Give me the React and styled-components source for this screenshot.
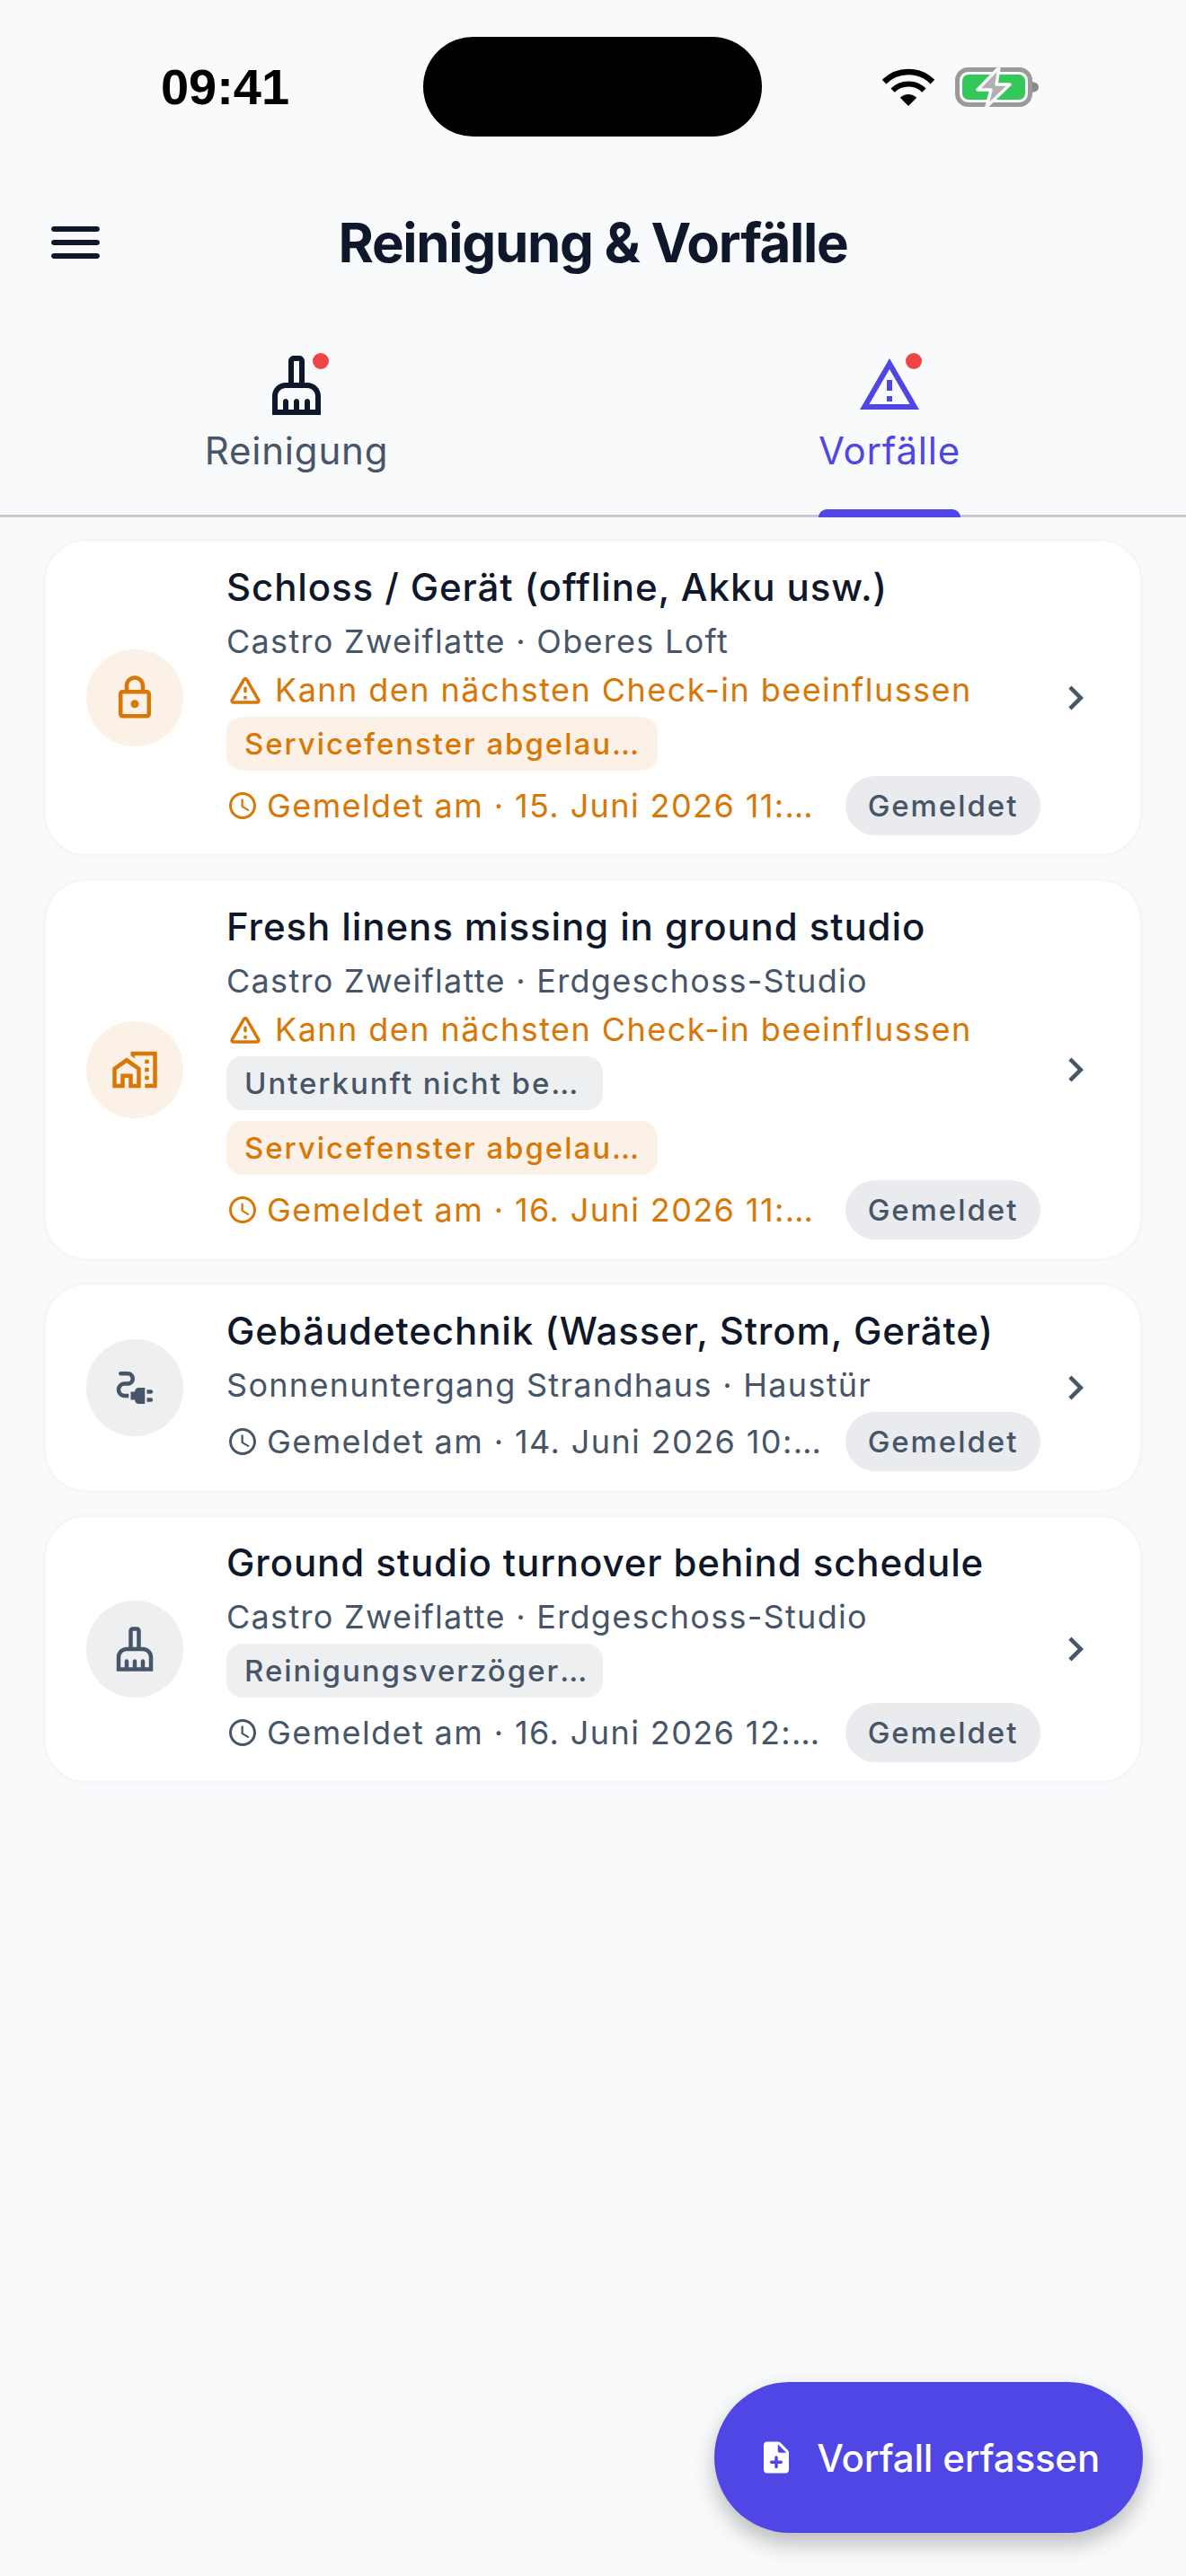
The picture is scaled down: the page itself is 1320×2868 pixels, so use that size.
import React from "react";
import styled, { createGlobalStyle } from "styled-components";
import {
    MdChevronRight,
    MdElectricalServices,
    MdOutlineAccessTime,
    MdOutlineCleaningServices,
    MdOutlineLock,
    MdOutlineMapsHomeWork,
    MdOutlineWarningAmber,
} from "react-icons/md";

const ORANGE = "#d97706";
const SLATE = "#475569";
const INK = "#0f172a";
const INDIGO = "#4f46e5";

const tones = {
    warn: { fg: ORANGE, bg: "#fcf1e7" },
    neutral: { fg: SLATE, bg: "#edeff1" },
};

const GlobalStyle = createGlobalStyle`
    html, body {
        margin: 0;
        padding: 0;
        background: #f9fafc;
    }
    * {
        box-sizing: border-box;
    }
`;

const incidents = [
    {
        Icon: MdOutlineLock,
        tone: "warn",
        title: "Schloss / Gerät (offline, Akku usw.)",
        place: "Castro Zweiflatte · Oberes Loft",
        warning: "Kann den nächsten Check-in beeinflussen",
        pills: [{ text: "Servicefenster abgelaufen", tone: "warn", width: 480 }],
        date: "Gemeldet am · 15. Juni 2026 11:24",
    },
    {
        Icon: MdOutlineMapsHomeWork,
        tone: "warn",
        title: "Fresh linens missing in ground studio",
        place: "Castro Zweiflatte · Erdgeschoss-Studio",
        warning: "Kann den nächsten Check-in beeinflussen",
        pills: [
            { text: "Unterkunft nicht bereit", tone: "neutral", width: 419 },
            { text: "Servicefenster abgelaufen", tone: "warn", width: 480 },
        ],
        date: "Gemeldet am · 16. Juni 2026 11:02",
    },
    {
        Icon: MdElectricalServices,
        tone: "neutral",
        title: "Gebäudetechnik (Wasser, Strom, Geräte)",
        place: "Sonnenuntergang Strandhaus · Haustür",
        pills: [],
        date: "Gemeldet am · 14. Juni 2026 10:15",
    },
    {
        Icon: MdOutlineCleaningServices,
        tone: "neutral",
        title: "Ground studio turnover behind schedule",
        place: "Castro Zweiflatte · Erdgeschoss-Studio",
        pills: [{ text: "Reinigungsverzögerung", tone: "neutral", width: 419 }],
        date: "Gemeldet am · 16. Juni 2026 12:40",
    },
];

const WifiIcon = () => (
    <svg width="58" height="42" viewBox="0 0 58 42">
        <path d="M19.8 32.8 A13 13 0 0 1 38.2 32.8 L29 42 Z" fill="#000" />
        <path d="M11.6 24.6 A24.6 24.6 0 0 1 46.4 24.6" fill="none" stroke="#000" strokeWidth="6" />
        <path d="M2.1 15.1 A38 38 0 0 1 55.9 15.1" fill="none" stroke="#000" strokeWidth="6.5" />
    </svg>
);

const BatteryIcon = () => (
    <svg width="94" height="46" viewBox="0 0 94 46">
        <rect x="2.5" y="3.5" width="81" height="39" rx="12" fill="none" stroke="#9a9a9a" strokeWidth="5" />
        <rect x="8" y="9" width="70" height="28" rx="7" fill="#34c759" />
        <path d="M86 17 C91 18 93 20 93 23 C93 26 91 28 86 29 Z" fill="#8a8a8a" />
        <path
            d="M49 1 L25 26 H40 L35 45 L61 20 H46 Z"
            fill="#b0b0b0"
            stroke="#f9fafc"
            strokeWidth="3.5"
            strokeLinejoin="round"
        />
    </svg>
);

const MenuIcon = () => (
    <svg width="72" height="72" viewBox="0 0 24 24" fill={INK}>
        <path d="M4 18h16c.55 0 1-.45 1-1s-.45-1-1-1H4c-.55 0-1 .45-1 1s.45 1 1 1zm0-5h16c.55 0 1-.45 1-1s-.45-1-1-1H4c-.55 0-1 .45-1 1s.45 1 1 1zM3 7c0 .55.45 1 1 1h16c.55 0 1-.45 1-1s-.45-1-1-1H4c-.55 0-1 .45-1 1z" />
    </svg>
);

const WarningRoundedIcon = () => (
    <svg width="42" height="42" viewBox="0 0 24 24" fill="currentColor">
        <path d="M12 5.99 19.53 19H4.47L12 5.99M2.74 18c-.77 1.33.19 3 1.73 3h15.06c1.54 0 2.5-1.67 1.73-3L13.73 4.99c-.77-1.33-2.69-1.33-3.46 0L2.74 18zM11 11v2c0 .55.45 1 1 1s1-.45 1-1v-2c0-.55-.45-1-1-1s-1 .45-1 1zm0 5h2v2h-2z" />
    </svg>
);

const NoteAddIcon = () => (
    <svg width="42" height="42" viewBox="0 0 24 24" fill="#fff">
        <path d="M14.59 2.59c-.38-.38-.89-.59-1.42-.59H6c-1.1 0-2 .9-2 2v16c0 1.1.89 2 1.99 2H18c1.1 0 2-.9 2-2V8.83c0-.53-.21-1.04-.59-1.41l-4.82-4.83zM15 16h-2v2c0 .55-.45 1-1 1s-1-.45-1-1v-2H9c-.55 0-1-.45-1-1s.45-1 1-1h2v-2c0-.55.45-1 1-1s1 .45 1 1v2h2c.55 0 1 .45 1 1s-.45 1-1 1zm-2-7V3.5L18.5 9H14c-.55 0-1-.45-1-1z" />
    </svg>
);

const App = () => (
    <Screen>
        <GlobalStyle />
        <StatusBar>
            <Time>09:41</Time>
            <Island />
            <StatusIcons>
                <WifiIcon />
                <BatteryIcon />
            </StatusIcons>
        </StatusBar>

        <Header>
            <MenuIcon />
            <Title>Reinigung &amp; Vorfälle</Title>
        </Header>

        <Tabs>
            <Tab>
                <TabIcon>
                    <MdOutlineCleaningServices size={72} />
                    <Dot />
                </TabIcon>
                <TabLabel>Reinigung</TabLabel>
            </Tab>
            <Tab $active>
                <TabIcon>
                    <MdOutlineWarningAmber size={72} />
                    <Dot />
                </TabIcon>
                <TabLabel $active>Vorfälle</TabLabel>
                <Indicator />
            </Tab>
        </Tabs>

        <List>
            {incidents.map(({ Icon, tone, title, place, warning, pills, date }) => (
                <Card key={title}>
                    <Circle $tone={tone}>
                        <Icon size={54} />
                    </Circle>
                    <Body>
                        <CardTitle>{title}</CardTitle>
                        <Place>{place}</Place>
                        {warning && (
                            <Warning>
                                <WarningRoundedIcon />
                                {warning}
                            </Warning>
                        )}
                        {pills.length > 0 && (
                            <Pills>
                                {pills.map(pill => (
                                    <Pill key={pill.text} $tone={pill.tone} $width={pill.width}>
                                        <PillText>{pill.text}</PillText>
                                    </Pill>
                                ))}
                            </Pills>
                        )}
                        <Footer>
                            <DateLine $warn={Boolean(warning)}>
                                <MdOutlineAccessTime size={36} />
                                <DateText>{date}</DateText>
                            </DateLine>
                            <Status>Gemeldet</Status>
                        </Footer>
                    </Body>
                    <Chevron>
                        <MdChevronRight size={54} />
                    </Chevron>
                </Card>
            ))}
        </List>

        <Fab>
            <NoteAddIcon />
            Vorfall erfassen
        </Fab>
    </Screen>
);

const Screen = styled.div`
    position: relative;
    width: 1320px;
    height: 2868px;
    overflow: hidden;
    background: #f9fafc;
    font-family: Inter, "Noto Sans", sans-serif;
`;

const StatusBar = styled.div`
    display: grid;
    grid-template-columns: 471px 377px 472px;
    align-items: center;
    height: 192px;
    padding-top: 41px;
    padding-bottom: 40px;
`;

const Time = styled.div`
    padding-left: 30px;
    text-align: center;
    font-family: "Liberation Sans", Arial, sans-serif;
    font-size: 56px;
    font-weight: 700;
    color: #000;
`;

const Island = styled.div`
    height: 111px;
    border-radius: 56px;
    background: #000;
`;

const StatusIcons = styled.div`
    display: flex;
    align-items: center;
    gap: 23px;
    padding-left: 134px;
`;

const Header = styled.div`
    display: grid;
    grid-template-columns: 72px 1fr 72px;
    align-items: center;
    height: 72px;
    margin-top: 42px;
    padding: 0 48px;
`;

const Title = styled.h1`
    margin: 0;
    text-align: center;
    font-size: 60px;
    font-weight: 700;
    line-height: 72px;
    letter-spacing: -1.3px;
    color: ${INK};
`;

const Tabs = styled.div`
    display: grid;
    grid-template-columns: 1fr 1fr;
    height: 183px;
    margin-top: 87px;
    border-bottom: 3px solid #c8c9d3;
`;

const Tab = styled.div`
    position: relative;
    display: flex;
    flex-direction: column;
    align-items: center;
    color: ${props => (props.$active ? INDIGO : INK)};
`;

const TabIcon = styled.div`
    position: relative;
    width: 72px;
    height: 72px;
`;

const Dot = styled.span`
    position: absolute;
    top: 0;
    right: 0;
    width: 18px;
    height: 18px;
    border-radius: 50%;
    background: #ef4444;
`;

const TabLabel = styled.div`
    margin-top: 7px;
    font-size: 42px;
    font-weight: 400;
    line-height: 60px;
    letter-spacing: 0.8px;
    color: ${props => (props.$active ? INDIGO : SLATE)};
`;

const Indicator = styled.span`
    position: absolute;
    bottom: -3px;
    left: 251px;
    width: 158px;
    height: 9px;
    border-radius: 9px 9px 0 0;
    background: ${INDIGO};
`;

const List = styled.div`
    display: flex;
    flex-direction: column;
    gap: 24px;
    padding: 24px 48px 0;
`;

const Card = styled.div`
    display: flex;
    align-items: center;
    padding: 21px 45px 21px 45px;
    border: 3px solid #f5f6f9;
    border-radius: 48px;
    background: #fff;
`;

const Circle = styled.div`
    flex: none;
    display: flex;
    align-items: center;
    justify-content: center;
    width: 108px;
    height: 108px;
    margin-right: 48px;
    border-radius: 50%;
    color: ${props => tones[props.$tone].fg};
    background: ${props => tones[props.$tone].bg};
`;

const Body = styled.div`
    flex: 1;
    min-width: 0;
    display: flex;
    flex-direction: column;
    gap: 6px;
    margin-right: 12px;
`;

const CardTitle = styled.div`
    font-size: 42px;
    font-weight: 500;
    line-height: 60px;
    letter-spacing: 0.9px;
    color: ${INK};
`;

const Place = styled.div`
    font-size: 36px;
    line-height: 48px;
    letter-spacing: 1.3px;
    color: ${SLATE};
`;

const Warning = styled.div`
    display: flex;
    align-items: center;
    gap: 12px;
    font-size: 36px;
    line-height: 48px;
    letter-spacing: 1.45px;
    color: ${ORANGE};
`;

const Pills = styled.div`
    display: flex;
    flex-direction: column;
    gap: 12px;
`;

const Pill = styled.div`
    width: ${props => props.$width}px;
    height: 60px;
    padding: 0 14px 0 20px;
    border-radius: 18px;
    line-height: 60px;
    color: ${props => tones[props.$tone].fg};
    background: ${props => tones[props.$tone].bg};
`;

const PillText = styled.div`
    overflow: hidden;
    white-space: nowrap;
    text-overflow: ellipsis;
    font-size: 33px;
    font-weight: 500;
    letter-spacing: 1.95px;
`;

const Footer = styled.div`
    display: flex;
    align-items: center;
    justify-content: space-between;
    gap: 26px;
    height: 66px;
`;

const DateLine = styled.div`
    flex: 1;
    min-width: 0;
    display: flex;
    align-items: center;
    gap: 9px;
    color: ${props => (props.$warn ? ORANGE : SLATE)};

    svg {
        flex: none;
    }
`;

const DateText = styled.div`
    overflow: hidden;
    white-space: nowrap;
    text-overflow: ellipsis;
    font-size: 36px;
    line-height: 48px;
    letter-spacing: 1.4px;
`;

const Status = styled.div`
    flex: none;
    width: 217px;
    height: 66px;
    border-radius: 33px;
    text-align: center;
    font-size: 33px;
    font-weight: 500;
    line-height: 66px;
    letter-spacing: 1.95px;
    color: ${SLATE};
    background: #e9ebee;
`;

const Chevron = styled.div`
    flex: none;
    display: flex;
    color: ${SLATE};
`;

const Fab = styled.button`
    position: absolute;
    right: 48px;
    bottom: 48px;
    display: flex;
    align-items: center;
    gap: 24px;
    height: 168px;
    padding: 0 48px;
    border: 0;
    border-radius: 84px;
    font-family: inherit;
    font-size: 42px;
    font-weight: 500;
    letter-spacing: -0.15px;
    color: #fff;
    background: ${INDIGO};
    box-shadow: 0 12px 24px rgba(0, 0, 0, 0.25);
`;

export default App;
